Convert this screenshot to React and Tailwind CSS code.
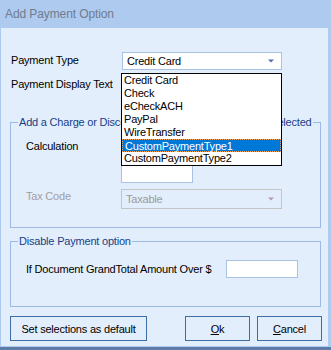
import React from "react";

const font = { fontFamily: '"Liberation Sans", Arial, sans-serif' };

const paymentTypes = [
  "Credit Card",
  "Check",
  "eCheckACH",
  "PayPal",
  "WireTransfer",
  "CustomPaymentType1",
  "CustomPaymentType2",
];

function Arrow({ color }) {
  return (
    <svg width="6" height="4" viewBox="0 0 6 4" className="shrink-0">
      <path d="M0 0.5h6L3 3.5z" fill={color} />
    </svg>
  );
}

function Select({ value, disabled, className = "" }) {
  return (
    <div
      className={`flex items-center justify-between pl-[4px] pr-[7px] ${
        disabled
          ? "border border-[#c4c4c4] text-[#9a9a9a]"
          : "border border-[#a9c1e2] bg-white text-black"
      } ${className}`}
    >
      <span>{value}</span>
      <Arrow color={disabled ? "#b995bd" : "#4f6ea5"} />
    </div>
  );
}

export default function App() {
  return (
    <div
      className="flex h-[350px] w-[331px] flex-col bg-[#aecaef] text-[11px] tracking-[-0.2px]"
      style={font}
    >
      <div className="flex h-[28px] shrink-0 items-center pl-[5px] text-[12px] tracking-[-0.1px] text-[#6e7c8e]">
        Add Payment Option
      </div>

      <div className="relative ml-[1px] mr-[3px] h-[318px] bg-[#e3eefd] pl-[9px] leading-[14px]">
        <div className="mt-[24px] flex h-[18px] items-center">
          <span className="-mt-[2px] w-[112px] pl-[1px] text-black">Payment Type</span>
          <Select value="Credit Card" className="h-[18px] w-[160px]" />
        </div>
        <div className="mt-[5px] flex h-[18px] items-center">
          <span className="w-[112px] pl-[1px] text-black">Payment Display Text</span>
          <div className="h-[18px] w-[160px] border border-[#a9c1e2] bg-white" />
        </div>

        <fieldset className="mt-[22px] h-[113px] w-[311px] border border-[#9cbae3] pl-[15px]">
          <legend className="-ml-[8px] whitespace-nowrap px-[1px] text-[#173f86]">
            Add a Charge or Discount when this Payment Type is selected
          </legend>
          <div className="mt-[10px] flex items-start">
            <span className="w-[95px] text-black">Calculation</span>
            <div className="mt-[1px] h-[43px] w-[72px] border border-[#a9c1e2] bg-white" />
          </div>
          <div className="mt-[6px] flex items-start">
            <span className="w-[95px] text-[#a0a0a0]">Tax Code</span>
            <Select value="Taxable" disabled className="h-[20px] w-[161px]" />
          </div>
        </fieldset>

        <fieldset className="mt-[6px] h-[73px] w-[311px] border border-[#9cbae3] pl-[15px]">
          <legend className="-ml-[8px] whitespace-nowrap px-[1px] text-[#173f86]">
            Disable Payment option
          </legend>
          <div className="mt-[12px] flex items-center">
            <span className="w-[200px] text-black">If Document GrandTotal Amount Over $</span>
            <div className="h-[18px] w-[72px] border border-[#a9c1e2] bg-white" />
          </div>
        </fieldset>

        <div className="mt-[9px] flex h-[25px] items-stretch pr-[6px] text-black">
          <button className="w-[137px] border border-[#3d6ea6] bg-[#e3eefd]">
            Set selections as default
          </button>
          <button className="ml-auto w-[65px] border border-[#3d6ea6] bg-[#e3eefd]">
            <u>O</u>k
          </button>
          <button className="ml-[7px] w-[65px] border border-[#3d6ea6] bg-[#e3eefd]">
            <u>C</u>ancel
          </button>
        </div>

        <div className="absolute left-[120px] top-[45px] w-[161px] border border-black bg-white text-black">
          {paymentTypes.map((item) => (
            <div
              key={item}
              className={`h-[13px] pl-[2px] leading-[12px] ${
                item === "CustomPaymentType1"
                  ? "border border-dotted border-[#f5a65b] bg-[#0078d7] pl-[1px] text-white"
                  : ""
              }`}
            >
              {item}
            </div>
          ))}
        </div>
      </div>
      <div className="h-[1px] bg-[#aecaef]" />
      <div className="h-[3px] bg-[#5d7da8]" />
    </div>
  );
}
